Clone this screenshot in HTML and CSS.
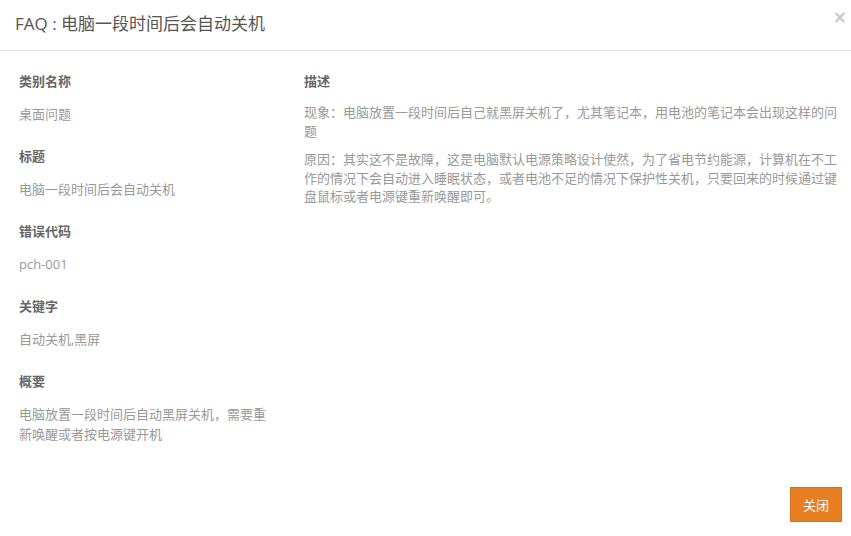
FILE: index.html
```html
<!DOCTYPE html>
<html lang="zh-CN">
<head>
<meta charset="utf-8">
<title>FAQ</title>
<link rel="stylesheet" href="styles.css">
</head>
<body>
<div class="modal">
  <div class="modal-header">
    <h4 class="modal-title">FAQ : 电脑一段时间后会自动关机</h4>
    <button class="close" type="button" aria-label="关闭">×</button>
  </div>
  <div class="modal-body">
    <div class="col-left">
      <div class="field">
        <div class="label">类别名称</div>
        <div class="value">桌面问题</div>
      </div>
      <div class="field">
        <div class="label">标题</div>
        <div class="value">电脑一段时间后会自动关机</div>
      </div>
      <div class="field">
        <div class="label">错误代码</div>
        <div class="value">pch-001</div>
      </div>
      <div class="field">
        <div class="label">关键字</div>
        <div class="value">自动关机,黑屏</div>
      </div>
      <div class="field">
        <div class="label">概要</div>
        <div class="value">电脑放置一段时间后自动黑屏关机，需要重新唤醒或者按电源键开机</div>
      </div>
    </div>
    <div class="col-right">
      <div class="label">描述</div>
      <div class="desc">
        <p>现象：电脑放置一段时间后自己就黑屏关机了，尤其笔记本，用电池的笔记本会出现这样的问题</p>
        <p>原因：其实这不是故障，这是电脑默认电源策略设计使然，为了省电节约能源，计算机在不工作的情况下会自动进入睡眠状态，或者电池不足的情况下保护性关机，只要回来的时候通过键盘鼠标或者电源键重新唤醒即可。</p>
      </div>
    </div>
  </div>
  <div class="modal-footer">
    <button class="btn-close" type="button">关闭</button>
  </div>
</div>
</body>
</html>
```

FILE: styles.css
```css
* { box-sizing: border-box; }
html, body {
  margin: 0;
  padding: 0;
  background: #fff;
}
body {
  font-family: "Open Sans", "Noto Sans CJK SC", sans-serif;
  font-size: 13px;
  color: #999;
  width: 851px;
  height: 536px;
  overflow: hidden;
}
.modal {
  display: flex;
  flex-direction: column;
  height: 536px;
}
.modal-header {
  position: relative;
  height: 51px;
  border-bottom: 1px solid #e5e5e5;
  padding: 12px 15px 0 15px;
}
.modal-title {
  margin: 0;
  font-size: 17px;
  font-weight: 400;
  line-height: 24px;
  color: #555;
}
.close {
  position: absolute;
  right: 4px;
  top: 8px;
  border: 0;
  background: transparent;
  padding: 0;
  font-family: "DejaVu Sans", sans-serif;
  font-size: 17px;
  font-weight: 700;
  line-height: 18px;
  color: #c8c8c8;
  cursor: pointer;
}
.modal-body {
  flex: 1;
  display: grid;
  grid-template-columns: 252px 1fr;
  column-gap: 33px;
  padding: 20px 13px 0 19px;
}
.field {
  margin-bottom: 22px;
}
.label {
  font-weight: 700;
  color: #666;
  line-height: 20px;
  margin-bottom: 13px;
}
.value {
  line-height: 20px;
  color: #999;
}
.desc p {
  margin: 0 0 10px 0;
  line-height: 18.57px;
  color: #999;
}
.desc {
  margin-top: -1px;
}
.modal-footer {
  display: flex;
  justify-content: flex-end;
  padding: 0 9px 14px 0;
}
.btn-close {
  width: 52px;
  height: 35px;
  background: #e87e22;
  border: 1px solid #d8721a;
  border-radius: 0;
  color: #fff;
  font-family: "Open Sans", "Noto Sans CJK SC", sans-serif;
  font-size: 13px;
  padding: 0;
  cursor: pointer;
}
```
